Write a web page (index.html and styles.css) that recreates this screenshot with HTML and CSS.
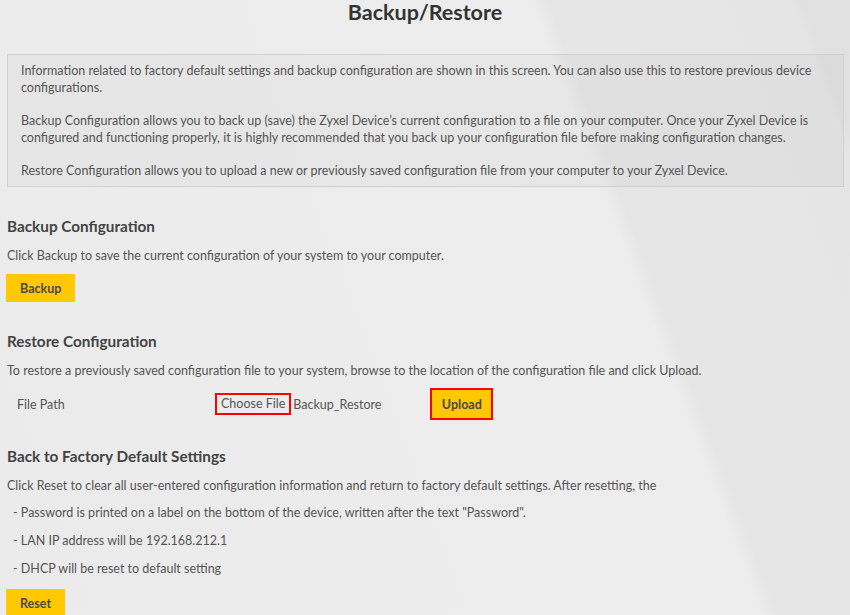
FILE: index.html
```html
<!DOCTYPE html>
<html lang="en">
<head>
    <meta charset="UTF-8">
    <meta name="viewport" content="width=device-width, initial-scale=1.0">
    <title>Backup/Restore</title>
    <link rel="stylesheet" href="styles.css">
</head>
<body>
    <div class="page">
        <h1 class="page-title">Backup/Restore</h1>

        <div class="info-box">
            <p>Information related to factory default settings and backup configuration are shown in this screen. You can also use this to restore previous device configurations.</p>
            <p>Backup Configuration allows you to back up (save) the Zyxel Device’s current configuration to a file on your computer. Once your Zyxel Device is configured and functioning properly, it is highly recommended that you back up your configuration file before making configuration changes.</p>
            <p>Restore Configuration allows you to upload a new or previously saved configuration file from your computer to your Zyxel Device.</p>
        </div>

        <div class="section">
            <h2 class="section-title">Backup Configuration</h2>
            <p class="section-text">Click Backup to save the current configuration of your system to your computer.</p>
            <button class="btn">Backup</button>
        </div>

        <div class="section">
            <h2 class="section-title">Restore Configuration</h2>
            <p class="section-text">To restore a previously saved configuration file to your system, browse to the location of the configuration file and click Upload.</p>
            <div class="file-row">
                <span class="file-label">File Path</span>
                <span class="file-choose">Choose File</span>
                <span class="file-name">Backup_Restore</span>
                <button class="btn btn-upload">Upload</button>
            </div>
        </div>

        <div class="section section-reset">
            <h2 class="section-title">Back to Factory Default Settings</h2>
            <p class="section-text">Click Reset to clear all user-entered configuration information and return to factory default settings. After resetting, the</p>
            <ul class="reset-list">
                <li>- Password is printed on a label on the bottom of the device, written after the text "Password".</li>
                <li>- LAN IP address will be 192.168.212.1</li>
                <li>- DHCP will be reset to default setting</li>
            </ul>
            <button class="btn btn-reset">Reset</button>
        </div>
    </div>
</body>
</html>
```

FILE: styles.css
```css
* {
    margin: 0;
    padding: 0;
    box-sizing: border-box;
}

html, body {
    height: 100%;
}

body {
    font-family: Lato, 'Liberation Sans', sans-serif;
    font-size: 12.5px;
    color: #555;
    background-color: #e8e8e8;
    background-image: linear-gradient(69.5deg, #ebebeb 0%, #ededed 70.5%, #e6e6e6 72%, #e5e5e5 94.5%, #e1e1e1 95.5%);
    overflow: hidden;
}

.page {
    padding: 0 6px;
}

.page-title {
    font-size: 21.5px;
    line-height: 25px;
    font-weight: bold;
    text-align: center;
    color: #333;
}

.info-box {
    margin: 29px 0 0 1px;
    padding: 7px 13px;
    border: 1px solid #d0d0d0;
    background-color: rgba(0, 0, 0, 0.025);
    line-height: 17px;
}

.info-box p + p {
    margin-top: 16px;
}

.section {
    margin-top: 29px;
}

.section-reset {
    margin-top: 26px;
}

.section-title {
    font-size: 15.3px;
    line-height: 20px;
    font-weight: bold;
    color: #444;
    padding-left: 1px;
}

.section-text {
    margin-top: 11px;
    line-height: 17px;
    padding-left: 1px;
}

.btn {
    display: inline-block;
    margin-top: 10px;
    height: 28px;
    padding: 0 14px;
    border: none;
    background-color: #ffc800;
    color: #4a4a4a;
    font-family: inherit;
    font-size: 12.5px;
    font-weight: bold;
}

.file-row {
    display: flex;
    align-items: center;
    margin-top: 9px;
    height: 32px;
}

.file-label {
    width: 209px;
    padding-left: 11px;
}

.file-choose {
    height: 22px;
    line-height: 18px;
    padding: 0 4px;
    border: 2px solid #ff0000;
}

.file-name {
    width: 139px;
    padding-left: 2px;
}

.btn-upload {
    margin-top: 0;
    height: 32px;
    width: 63px;
    padding: 0;
    border: 2px solid #ff0000;
}

.reset-list {
    list-style: none;
    margin-top: 5px;
    padding-left: 7px;
}

.reset-list li {
    line-height: 28px;
}

.btn-reset {
    margin-top: 6px;
}
```
